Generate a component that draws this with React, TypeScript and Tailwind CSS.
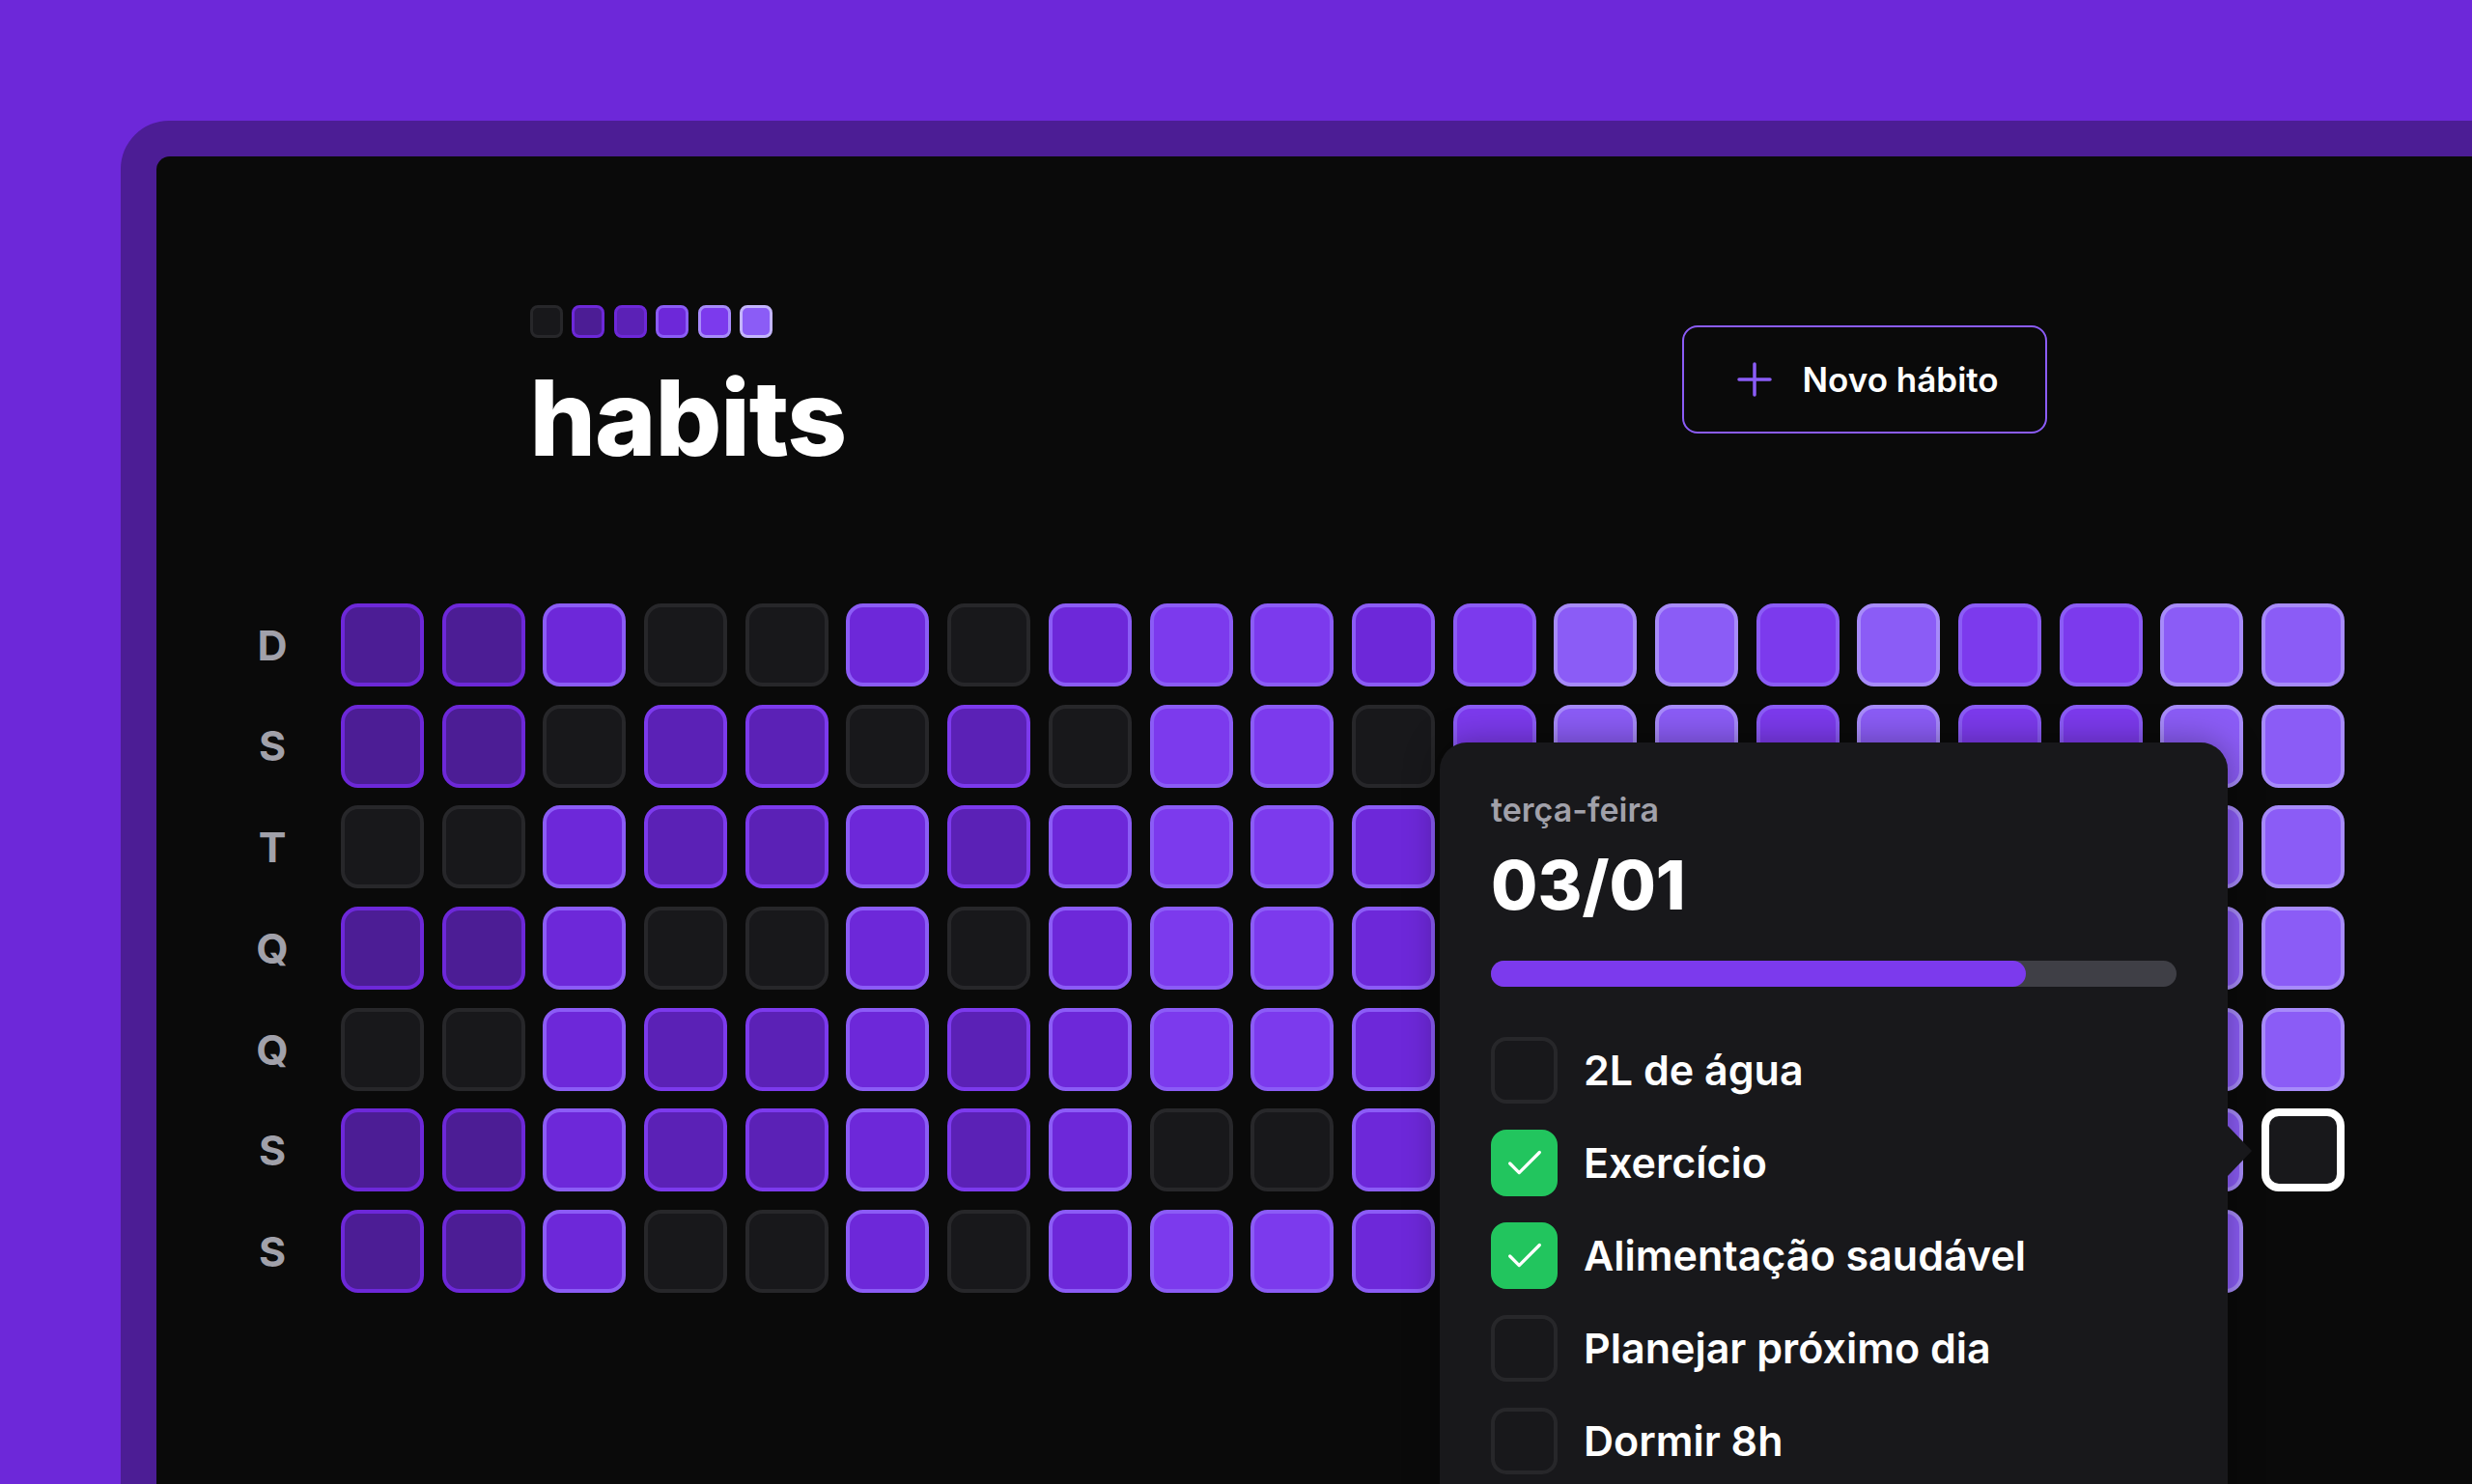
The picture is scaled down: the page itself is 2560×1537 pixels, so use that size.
import { Check } from 'lucide-react';

type Cell = number | 'sel' | null;

const levelClass: Record<number, string> = {
  0: 'bg-[#18181b] border-[#27272a]',
  1: 'bg-[#4c1d95] border-[#6d28d9]',
  2: 'bg-[#5b21b6] border-[#7c3aed]',
  3: 'bg-[#6d28d9] border-[#8b5cf6]',
  4: 'bg-[#7c3aed] border-[#8b5cf6]',
  5: 'bg-[#8b5cf6] border-[#a78bfa]',
};

const weekDays = ['D', 'S', 'T', 'Q', 'Q', 'S', 'S'];

// one array per week (column), Sunday first
const weeks: Cell[][] = [
  [1, 1, 0, 1, 0, 1, 1],
  [1, 1, 0, 1, 0, 1, 1],
  [3, 0, 3, 3, 3, 3, 3],
  [0, 2, 2, 0, 2, 2, 0],
  [0, 2, 2, 0, 2, 2, 0],
  [3, 0, 3, 3, 3, 3, 3],
  [0, 2, 2, 0, 2, 2, 0],
  [3, 0, 3, 3, 3, 3, 3],
  [4, 4, 4, 4, 4, 0, 4],
  [4, 4, 4, 4, 4, 0, 4],
  [3, 0, 3, 3, 3, 3, 3],
  [4, 4, 4, 4, 4, 4, 4],
  [5, 5, 5, 5, 5, 5, 5],
  [5, 5, 5, 5, 5, 5, 5],
  [4, 4, 4, 4, 4, 4, 4],
  [5, 5, 5, 5, 5, 5, 5],
  [4, 4, 4, 4, 4, 4, 4],
  [4, 4, 4, 4, 4, 4, 4],
  [5, 5, 5, 5, 5, 5, 5],
  [5, 5, 5, 5, 5, 'sel', null],
];

const habits = [
  { title: '2L de água', done: false },
  { title: 'Exercício', done: true },
  { title: 'Alimentação saudável', done: true },
  { title: 'Planejar próximo dia', done: false },
  { title: 'Dormir 8h', done: false },
];

const legend = [
  'bg-[#18181b] border-[#27272a]',
  'bg-[#4c1d95] border-[#6d28d9]',
  'bg-[#5b21b6] border-[#6d28d9]',
  'bg-[#6d28d9] border-[#8b5cf6]',
  'bg-[#7c3aed] border-[#a78bfa]',
  'bg-[#8b5cf6] border-[#c4b5fd]',
];

function DayCell({ value }: { value: Cell }) {
  if (value === null) return null;
  if (value === 'sel') {
    return <div className="h-[86px] w-[86px] rounded-[18px] border-[8px] border-white bg-[#18181b]" />;
  }
  return <div className={`h-[86px] w-[86px] rounded-[18px] border-4 ${levelClass[value]}`} />;
}

function DayPopover() {
  return (
    <div className="absolute left-[1138px] top-[144px] w-[816px] rounded-[28px] bg-[#18181b] px-[53px] pb-[80px] pt-[53px] shadow-[0_0_36px_rgba(0,0,0,0.35)]">
      <span className="block text-[34px] font-semibold leading-none text-[#a1a1aa]">terça-feira</span>
      <span className="mt-[26px] block text-[70px] font-extrabold leading-none text-white">03/01</span>
      <div className="mt-[43px] h-[27px] w-full rounded-full bg-[#3f3f46]">
        <div className="h-full w-[78%] rounded-full bg-[#7c3aed]" />
      </div>
      <div className="mt-[52px] flex flex-col gap-[27px]">
        {habits.map((h) => (
          <div key={h.title} className="flex items-center gap-[27px]">
            <div
              className={`flex h-[69px] w-[69px] items-center justify-center rounded-[16px] border-4 ${
                h.done ? 'border-[#22c55e] bg-[#22c55e]' : 'border-[#27272a] bg-[#18181b]'
              }`}
            >
              {h.done && <Check size={46} strokeWidth={1.7} className="text-white" />}
            </div>
            <span className="text-[43px] font-semibold leading-none text-white">{h.title}</span>
          </div>
        ))}
      </div>
      <div className="absolute left-full top-[397px] h-0 w-0 border-y-[26px] border-l-[25px] border-y-transparent border-l-[#18181b]" />
    </div>
  );
}

export default function App() {
  return (
    <div className="h-[1537px] w-full overflow-hidden bg-[#6d28d9] pl-[125px] pt-[125px] [font-family:Inter,sans-serif]">
      <div className="h-full rounded-tl-[50px] bg-[#4c1d95] pl-[37px] pt-[37px]">
        <div className="h-full rounded-tl-[14px] bg-[#0a0a0a] pl-[77px] pt-[154px]">
          <div className="flex w-[2190px] flex-col">
            <header className="mx-auto flex w-[1571px] items-start justify-between">
              <div className="flex flex-col">
                <div className="flex gap-[9.6px]">
                  {legend.map((c) => (
                    <div key={c} className={`h-[34px] w-[34px] rounded-[8px] border-[3px] ${c}`} />
                  ))}
                </div>
                <h1 className="mt-[29px] text-[108px] font-extrabold leading-none tracking-[-0.01em] text-white">habits</h1>
              </div>
              <button className="mt-[21px] flex h-[112px] w-[378px] items-center gap-[32px] rounded-[16px] border-2 border-[#8b5cf6] pl-[55px]">
                <svg width="36" height="36" viewBox="0 0 36 36" fill="none">
                  <path d="M18 2v32M2 18h32" stroke="#8b5cf6" strokeWidth="3.5" strokeLinecap="round" />
                </svg>
                <span className="text-[35px] font-semibold leading-none text-white">Novo hábito</span>
              </button>
            </header>

            <div className="mt-[138px] flex gap-[28px]">
              <div className="grid w-[86px] grid-rows-7 gap-[18.7px]">
                {weekDays.map((d, i) => (
                  <div key={i} className="flex h-[86px] items-center justify-center text-[43px] font-bold text-[#a1a1aa]">
                    {d}
                  </div>
                ))}
              </div>
              <div className="relative">
                <div className="grid grid-flow-col grid-rows-7 gap-[18.7px]">
                  {weeks.flatMap((w, wi) => w.map((v, di) => <DayCell key={`${wi}-${di}`} value={v} />))}
                </div>
                <DayPopover />
              </div>
            </div>
          </div>
        </div>
      </div>
    </div>
  );
}
